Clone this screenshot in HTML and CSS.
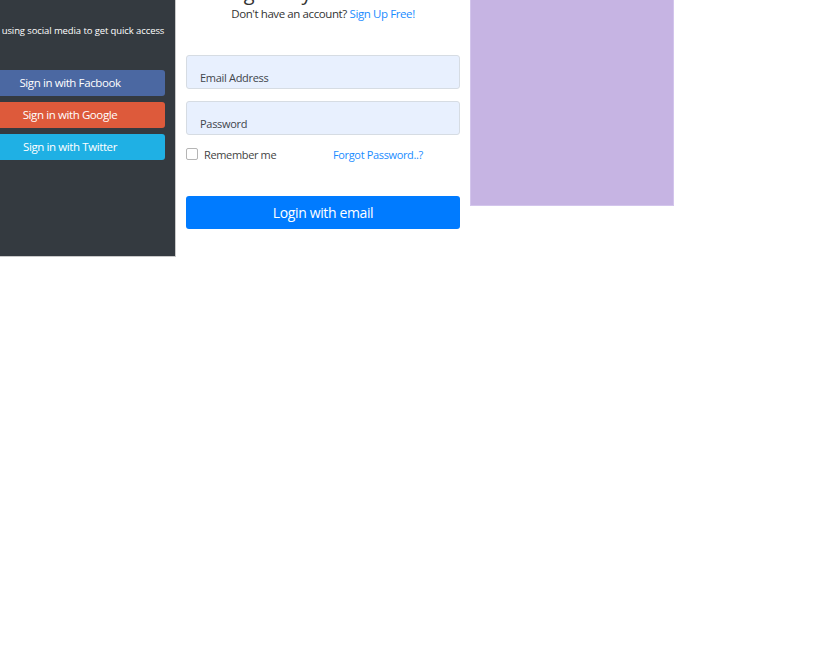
FILE: index.html
```html
<!DOCTYPE html>
<html>
<head>
<meta charset="utf-8">
<link rel="stylesheet" href="styles.css">
</head>
<body>
<div class="wrap">
  <div class="social">
    <p class="social-text">Login using social media to get quick access</p>
    <a class="sbtn fb">Sign in with Facbook</a>
    <a class="sbtn gg">Sign in with Google</a>
    <a class="sbtn tw">Sign in with Twitter</a>
  </div>
  <div class="form-col">
    <h2 class="title">Login to your Account</h2>
    <p class="signup">Don't have an account? <a class="link">Sign Up Free!</a></p>
    <div class="field">Email Address</div>
    <div class="field">Password</div>
    <div class="row">
      <label class="remember"><span class="check"></span>Remember me</label>
      <a class="link forgot">Forgot Password..?</a>
    </div>
    <div class="login">Login with email</div>
  </div>
  <div class="purple"></div>
</div>
</body>
</html>
```
FILE: styles.css
```css
* { box-sizing: border-box; }
body {
  margin: 0;
  font-family: "Open Sans", "Noto Sans", sans-serif;
  background: #fff;
  color: #212529;
}
.wrap {
  display: flex;
  align-items: flex-start;
  margin-left: -35px;
}
.social {
  width: 211px;
  height: 257px;
  background: #343a40;
  border-right: 1px solid #c9c9c9;
  border-bottom: 1px solid #c9c9c9;
  padding: 24px 10px 0 10px;
  display: flex;
  flex-direction: column;
}
.social-text {
  margin: 0 0 32px 0;
  color: #fff;
  font-size: 9.5px;
  line-height: 14px;
  letter-spacing: -0.1px;
  text-align: center;
  white-space: nowrap;
}
.sbtn {
  display: block;
  height: 26px;
  line-height: 26px;
  border-radius: 3px;
  color: #fff;
  font-size: 11.5px;
  letter-spacing: -0.4px;
  text-align: center;
  margin-bottom: 6px;
}
.fb { background: #4b68a2; }
.gg { background: #dd5a3b; }
.tw { background: #1fb0e4; }
.form-col {
  width: 294px;
  padding: 0 10px;
}
.title {
  margin: -19px 0 0 0;
  font-size: 20px;
  line-height: 24px;
  font-weight: 400;
  text-align: center;
  color: #333;
}
.signup {
  margin: 0 0 32px 0;
  font-size: 11.5px;
  line-height: 18px;
  letter-spacing: -0.4px;
  text-align: center;
  color: #333;
}
.link { color: #1a8cff; }
.field {
  height: 34px;
  background: #e8f0fe;
  border: 1px solid #d6dce3;
  border-radius: 3px;
  padding: 14px 14px 0 13px;
  font-size: 11px;
  line-height: 15px;
  letter-spacing: -0.3px;
  color: #3f454b;
  margin-bottom: 12px;
}
.row {
  display: flex;
  align-items: center;
  font-size: 11px;
  letter-spacing: -0.35px;
  height: 18px;
  margin-top: -2px;
}
.remember {
  display: flex;
  align-items: center;
  color: #444;
  width: 147px;
}
.check {
  width: 12px;
  height: 12px;
  border: 1px solid #b5b5b5;
  border-radius: 2px;
  margin-right: 6px;
  background: #fff;
}
.login {
  margin-top: 33px;
  height: 33px;
  line-height: 33px;
  background: #007bff;
  border-radius: 3px;
  color: #fff;
  text-align: center;
  font-size: 14px;
  letter-spacing: -0.37px;
}
.purple {
  width: 204px;
  height: 206px;
  background: #c6b4e3;
  border: 1px solid #d3c5ec;
  border-top: 0;
}
```
